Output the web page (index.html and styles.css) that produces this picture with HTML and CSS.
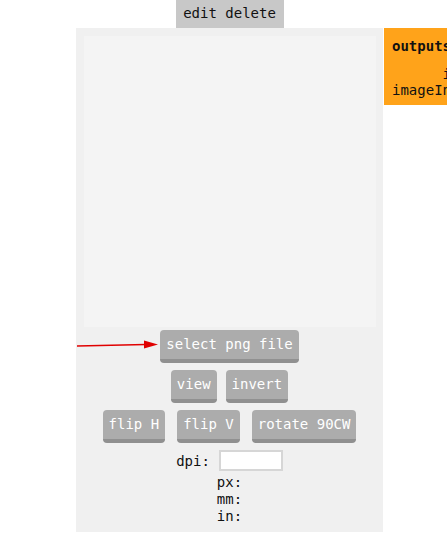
FILE: index.html
```html
<!DOCTYPE html>
<html lang="en">
<head>
    <meta charset="UTF-8">
    <meta name="viewport" content="width=device-width, initial-scale=1.0">
    <title>Image node</title>
    <link rel="stylesheet" href="styles.css">
</head>
<body>
    <div class="node">
        <div class="tab">edit delete</div>

        <div class="panel">
            <div class="canvas"></div>

            <svg class="arrow" width="84" height="12" viewBox="0 0 84 12">
                <line x1="1" y1="7" x2="70" y2="5.5" stroke="#e00000" stroke-width="1.6"/>
                <polygon points="68,1.5 82,5.5 68,9.5" fill="#e00000"/>
            </svg>

            <div class="btn-row first">
                <button class="btn">select png file</button>
            </div>
            <div class="btn-row tight">
                <button class="btn">view</button>
                <button class="btn">invert</button>
            </div>
            <div class="btn-row">
                <button class="btn">flip H</button>
                <button class="btn">flip V</button>
                <button class="btn">rotate 90CW</button>
            </div>

            <div class="dpi">
                <label for="dpi">dpi:</label>
                <input type="text" id="dpi">
            </div>
            <div class="sizes">
                <div>px:</div>
                <div>mm:</div>
                <div>in:</div>
            </div>
        </div>

        <div class="outputs">
            <div class="outputs-title">outputs:</div>
            <div class="outputs-line">      image</div>
            <div class="outputs-line">imageInverted</div>
        </div>
    </div>
</body>
</html>
```

FILE: styles.css
```css
body {
    margin: 0;
    font-family: "DejaVu Sans Mono", "Liberation Mono", monospace;
    font-size: 14px;
    color: #111;
    background: #fff;
    overflow: hidden;
}
.node {
    display: grid;
    grid-template-columns: 307px 200px;
    column-gap: 1px;
    margin-left: 76px;
}
.tab {
    grid-column: 1;
    justify-self: center;
    width: 108px;
    height: 28px;
    line-height: 27px;
    text-align: center;
    background-color: #c8c8c8;
    color: #111;
}
.panel {
    grid-column: 1;
    grid-row: 2;
    position: relative;
    background-color: #f0f0f0;
    padding: 8px 0 0;
    height: 504px;
    box-sizing: border-box;
}
.canvas {
    height: 291px;
    margin: 0 7px 0 8px;
    background-color: #f4f4f4;
}
.arrow {
    position: absolute;
    left: 0;
    top: 311px;
}
.btn-row {
    display: flex;
    justify-content: center;
    gap: 12px;
    margin-top: 7px;
}
.btn-row.first {
    margin-top: 3px;
}
.btn-row.tight {
    gap: 9px;
}
.btn {
    font-family: inherit;
    font-size: 14px;
    color: white;
    background-color: #acacac;
    border: none;
    border-bottom: 4px solid #909090;
    border-radius: 4px;
    padding: 0 6px;
    height: 33px;
    line-height: 29px;
    cursor: pointer;
}
.btn:hover {
    background-color: #9e9e9e;
}
.dpi {
    display: flex;
    justify-content: center;
    align-items: center;
    gap: 9px;
    margin-top: 7px;
}
.dpi input {
    width: 64px;
    height: 21px;
    box-sizing: border-box;
    border: 2px solid #d6d6d6;
    background: white;
    padding: 0 3px;
    font-family: inherit;
}
.sizes {
    text-align: center;
    line-height: 17px;
    margin-top: 3px;
}
.outputs {
    grid-column: 2;
    grid-row: 2;
    align-self: start;
    background-color: #ffa31a;
    padding: 10px 8px 7px;
    line-height: 16px;
    color: #111;
}
.outputs-title {
    font-weight: bold;
    margin-bottom: 12px;
}
.outputs-line {
    white-space: pre;
}
```
